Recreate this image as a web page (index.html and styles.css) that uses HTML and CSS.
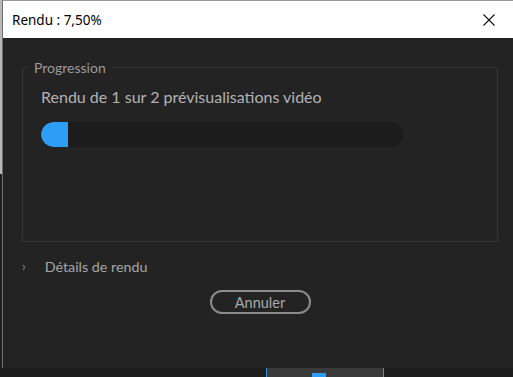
FILE: index.html
```html
<!DOCTYPE html>
<html lang="fr">
<head>
    <meta charset="UTF-8">
    <meta name="viewport" content="width=device-width, initial-scale=1.0">
    <title>Rendu : 7,50%</title>
    <link rel="stylesheet" href="styles.css">
</head>
<body>

<div class="window">
    <div class="titlebar">
        <span class="title">Rendu : 7,50%</span>
        <span class="close">
            <svg width="12" height="12" viewBox="0 0 12 12"><path d="M0.5 0.5 L11.5 11.5 M11.5 0.5 L0.5 11.5" stroke="#111" stroke-width="1.1" fill="none"/></svg>
        </span>
    </div>

    <div class="body">
        <fieldset class="group">
            <legend>Progression</legend>
            <p class="status">Rendu de 1 sur 2 prévisualisations vidéo</p>
            <div class="track">
                <div class="fill" style="width: 27px"></div>
            </div>
        </fieldset>

        <div class="details">
            <span class="chevron">&#8250;</span>
            <span>Détails de rendu</span>
        </div>

        <div class="actions">
            <button class="cancel">Annuler</button>
        </div>
    </div>
</div>

<div class="timeline">
    <div class="tl-left"></div>
    <div class="tl-selected"><span class="tl-marker"></span></div>
    <div class="tl-right"></div>
</div>

</body>
</html>
```

FILE: styles.css
```css
* {
    margin: 0;
    padding: 0;
    box-sizing: border-box;
}
body {
    width: 513px;
    height: 377px;
    overflow: hidden;
    background: linear-gradient(to bottom, #b8b8b8 0, #b8b8b8 174px, #1f1f1f 174px);
    font-family: "Noto Sans", sans-serif;
}
.window {
    margin-left: 2px;
    height: 368px;
    display: flex;
    flex-direction: column;
    border-left: 1px solid #6e6e6e;
    border-top: 1px solid #9a9a9a;
}
.titlebar {
    height: 37px;
    background: #ffffff;
    display: flex;
    align-items: center;
    justify-content: space-between;
    padding-left: 9px;
}
.title {
    font-family: "Noto Sans", sans-serif;
    font-size: 13.5px;
    color: #000;
}
.close {
    width: 46px;
    height: 37px;
    display: flex;
    align-items: center;
    justify-content: center;
    margin-right: 1px;
}
.body {
    flex: 1;
    background: #232323;
    padding: 21px 15px 0 19px;
    color: #a9a9a9;
    font-family: "Lato", sans-serif;
}
.group {
    height: 183px;
    border: 1px solid #363636;
    border-radius: 3px;
    padding: 11px 18px 0 18px;
}
.group legend {
    margin-left: -13px;
    padding: 0 6px;
    font-size: 14px;
    color: #9c9c9c;
}
.status {
    font-size: 16px;
    line-height: 19px;
    color: #b3b3b3;
    margin-bottom: 16px;
}
.track {
    width: 362px;
    height: 25px;
    background: #1c1c1c;
    border-radius: 13px;
    overflow: hidden;
}
.fill {
    height: 100%;
    background: #2e9df5;
    border-radius: 13px 0 0 13px;
}
.details {
    display: flex;
    align-items: center;
    gap: 19px;
    margin-top: 15px;
    font-size: 14.3px;
    line-height: 19px;
    color: #a6a6a6;
}
.chevron {
    font-size: 13px;
    color: #8a8a8a;
}
.actions {
    display: flex;
    justify-content: center;
    margin-top: 14px;
}
.cancel {
    width: 101px;
    height: 24px;
    background: transparent;
    border: 2px solid #8c8c8c;
    border-radius: 12px;
    color: #a9a9a9;
    font-family: "Lato", sans-serif;
    font-size: 14.5px;
}
.timeline {
    height: 9px;
    display: flex;
    background: #1d1d1d;
}
.tl-left {
    width: 266px;
}
.tl-right {
    flex: 1;
}
.tl-selected {
    width: 118px;
    background: #3a3a3a;
    border-left: 1px solid #3f8fd8;
    border-right: 1px solid #3f8fd8;
    display: flex;
    justify-content: center;
    align-items: flex-end;
}
.tl-marker {
    width: 14px;
    height: 4px;
    background: #2e9df5;
    margin-right: 12px;
}
```
